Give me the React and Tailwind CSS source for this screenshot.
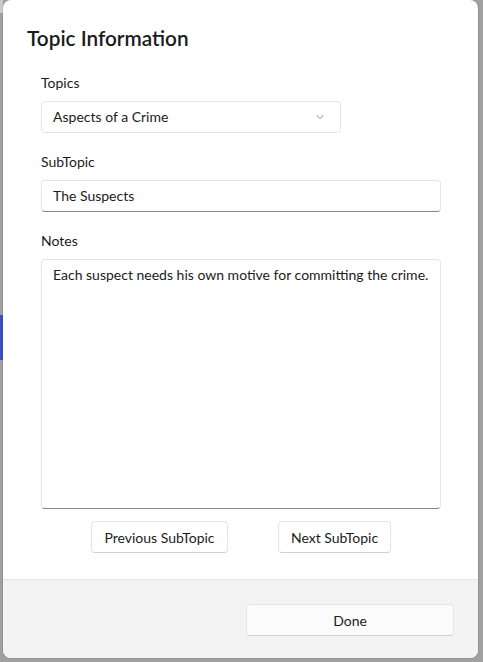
import { ChevronDown } from 'lucide-react';

const FONT = { fontFamily: 'Lato, "Noto Sans", sans-serif' };

const Label = ({ children }) => (
  <div className="text-[14px] leading-[20px] text-[#1b1b1b]">{children}</div>
);

const SoftButton = ({ children, className = '' }) => (
  <button
    className={`h-[32px] rounded-[4px] border border-[#e5e5e5] border-b-[#d0d0d0] bg-white text-[14px] text-[#1b1b1b] ${className}`}
  >
    {children}
  </button>
);

export default function App() {
  return (
    <div className="w-[483px] h-[662px] bg-[#a0a0a0] flex overflow-hidden" style={FONT}>
      {/* backdrop strip */}
      <div className="w-[3px] shrink-0 flex flex-col">
        <div className="h-[13px] bg-[#c9c9c9]" />
        <div className="h-[302px]" />
        <div className="h-[45px] bg-[#3a4fc0]" />
      </div>

      {/* dialog */}
      <div className="w-[475px] h-[658px] shrink-0 bg-white rounded-[8px] overflow-hidden flex flex-col shadow-[0_0_0_1px_rgba(0,0,0,0.08)]">
        <div className="flex-1 pt-[24px] pl-[24px]">
          <h1 className="text-[20.75px] leading-[28px] font-semibold text-[#1b1b1b]">Topic Information</h1>

          <div className="pl-[14px] w-[414px] mt-[21px]">
            <Label>Topics</Label>
            <div className="mt-[8px] w-[300px] h-[32px] rounded-[4px] border border-[#e5e5e5] flex items-center justify-between pl-[11px] pr-[14px]">
              <span className="text-[14px] text-[#1b1b1b] -mt-[1px]">Aspects of a Crime</span>
              <ChevronDown size={12} strokeWidth={1.5} className="text-[#5f5f5f]" />
            </div>

            <div className="mt-[19px]">
              <Label>SubTopic</Label>
            </div>
            <div className="mt-[8px] h-[32px] rounded-[4px] border border-[#e5e5e5] border-b-[#868686] flex items-center pl-[11px]">
              <span className="text-[14px] text-[#1b1b1b] -mt-[1px]">The Suspects</span>
            </div>

            <div className="mt-[19px]">
              <Label>Notes</Label>
            </div>
            <div className="mt-[8px] h-[250px] rounded-[4px] border border-[#e5e5e5] border-b-[#868686] pl-[11px] pt-[5px]">
              <p className="text-[14px] leading-[20px] text-[#1b1b1b]">
                Each suspect needs his own motive for committing the crime.
              </p>
            </div>

            <div className="mt-[12px] flex justify-center gap-[50px]">
              <SoftButton className="w-[137px]">Previous SubTopic</SoftButton>
              <SoftButton className="w-[113px]">Next SubTopic</SoftButton>
            </div>
          </div>
        </div>

        {/* footer */}
        <div className="h-[79px] bg-[#f3f3f3] border-t border-[#e5e5e5] flex items-center justify-end pr-[24px]">
          <button className="w-[208px] h-[32px] mt-[2px] rounded-[4px] border border-[#e5e5e5] border-b-[#d0d0d0] bg-[#fbfbfb] text-[14px] text-[#1b1b1b]">
            Done
          </button>
        </div>
      </div>
    </div>
  );
}
